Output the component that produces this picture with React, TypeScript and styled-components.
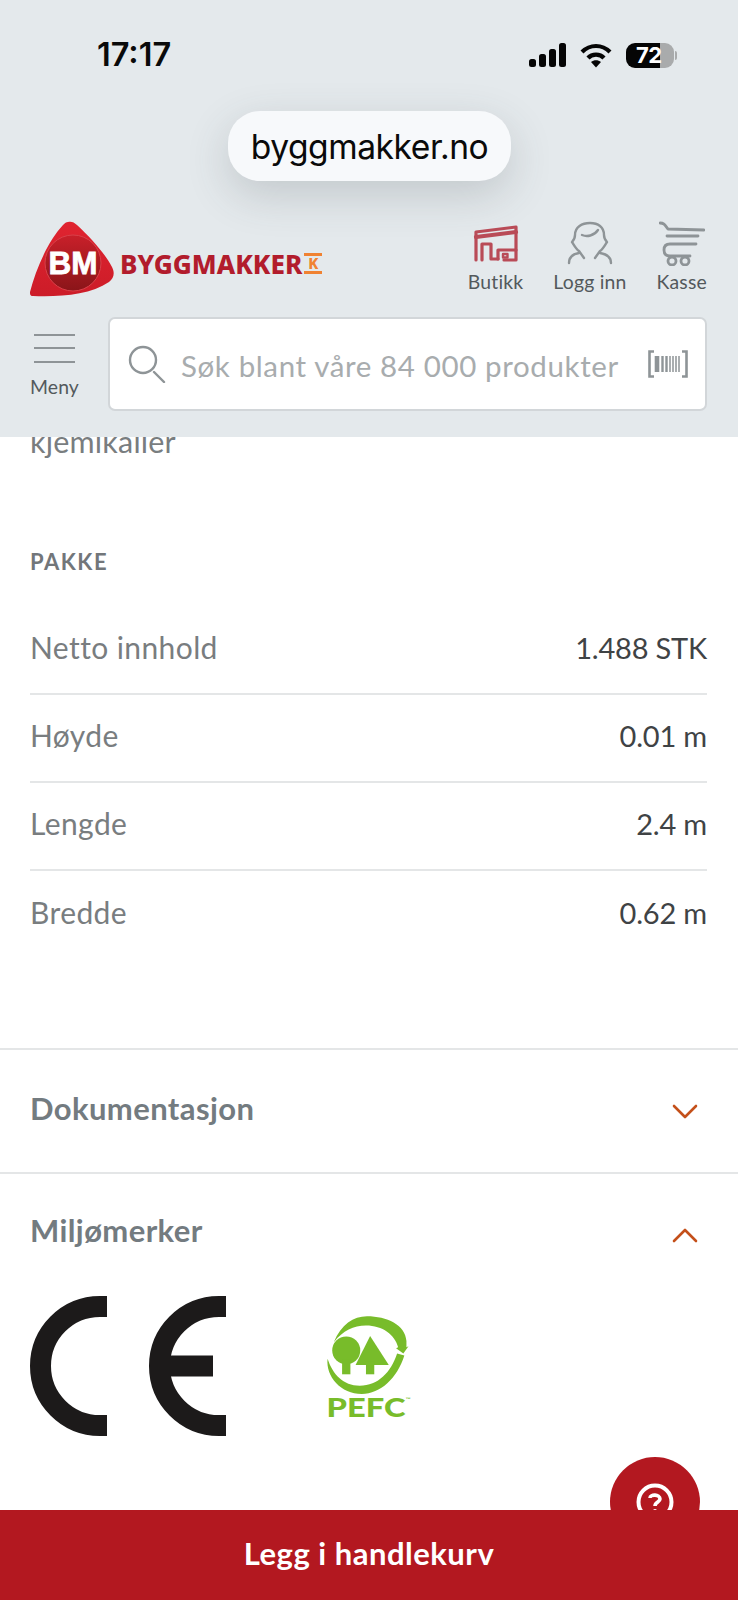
import React from "react";
import styled, { createGlobalStyle } from "styled-components";

const Global = createGlobalStyle`
  html, body { margin: 0; padding: 0; background: #fff; }
  * { box-sizing: border-box; }
`;

const Page = styled.div`
  position: relative;
  width: 738px;
  height: 1600px;
  overflow: hidden;
  background: #fff;
  font-family: Lato, "Noto Sans", sans-serif;
`;

const Header = styled.header`
  position: relative;
  z-index: 1;
  height: 437px;
  background: #e4e9ec;
  display: flex;
  flex-direction: column;
`;

const StatusBar = styled.div`
  height: 68px;
  padding: 42px 64px 0 97px;
  display: flex;
  align-items: center;
  justify-content: space-between;
  font-family: Inter, sans-serif;
`;

const Clock = styled.span`
  font-size: 32.5px;
  font-weight: 600;
  color: #0a0a0a;
  letter-spacing: 0;
  line-height: 26px;
`;

const StatusIcons = styled.div`
  display: flex;
  align-items: center;
  gap: 14px;
`;

const Battery = styled.div`
  position: relative;
  width: 48px;
  height: 25px;
  border-radius: 9px;
  background: linear-gradient(90deg, #050505 0 34px, #a9abac 34px);
  color: #fff;
  font-size: 22px;
  font-weight: 700;
  line-height: 25px;
  padding-left: 10px;
  letter-spacing: -0.5px;
  &::after {
    content: "";
    position: absolute;
    right: -3px;
    top: 8px;
    width: 2px;
    height: 9px;
    border-radius: 0 2px 2px 0;
    background: #a9abac;
  }
`;

const UrlPill = styled.div`
  align-self: center;
  width: 283px;
  height: 70px;
  margin-top: 43px;
  margin-left: 1px;
  border-radius: 32px;
  background: #f7f9fb;
  box-shadow: 0 14px 44px rgba(60, 70, 75, 0.2);
  display: flex;
  align-items: center;
  justify-content: center;
  font-family: Inter, sans-serif;
  font-size: 33.6px;
  letter-spacing: -0.45px;
  color: #0a0a0a;
`;

const BrandRow = styled.div`
  margin-top: 40px;
  padding: 0 31px 0 30px;
  height: 76px;
  display: flex;
  justify-content: space-between;
  align-items: flex-start;
`;

const Brand = styled.div`
  display: flex;
  align-items: center;
  height: 76px;
`;

const WordMark = styled.span`
  margin-left: 6px;
  margin-top: 9px;
  font-family: "Noto Sans", sans-serif;
  font-weight: 800;
  font-size: 26.1px;
  letter-spacing: 0;
  color: #b21c2c;
  line-height: 26px;
`;

const KMark = styled.span`
  margin-left: 2px;
  margin-top: 9px;
  width: 18px;
  height: 21px;
  border-top: 3px solid #f08232;
  border-bottom: 3px solid #f08232;
  font-family: "Noto Sans", sans-serif;
  font-weight: 800;
  font-size: 15px;
  line-height: 15px;
  color: #f08232;
  text-align: center;
`;

const Nav = styled.nav`
  display: flex;
  gap: 30px;
`;

const NavItem = styled.div`
  display: flex;
  flex-direction: column;
  align-items: center;
  font-size: 19.4px;
  line-height: 22px;
  color: #53595c;
  letter-spacing: 0.2px;
`;

const NavIcon = styled.svg`
  display: block;
  width: 46px;
  height: 45px;
  margin-bottom: 5px;
  fill: none;
  stroke-linecap: round;
  stroke-linejoin: round;
`;

const SearchRow = styled.div`
  margin-top: 20px;
  padding: 0 31px 0 30px;
  display: flex;
  gap: 29px;
`;

const MenuButton = styled.div`
  width: 49px;
  display: flex;
  flex-direction: column;
  align-items: center;
  font-size: 19.4px;
  line-height: 22px;
  color: #53595c;
  letter-spacing: 0.1px;
  padding-top: 17px;
`;

const MenuLines = styled.div`
  flex: none;
  width: 41px;
  height: 29px;
  margin-bottom: 13px;
  border-top: 2.5px solid #8e9497;
  border-bottom: 2.5px solid #8e9497;
  position: relative;
  &::after {
    content: "";
    position: absolute;
    left: 0;
    right: 0;
    top: 10.5px;
    height: 2.5px;
    background: #8e9497;
  }
`;

const SearchBox = styled.div`
  width: 599px;
  height: 94px;
  background: #fff;
  border: 2px solid #d2d6d9;
  border-radius: 7px;
  display: flex;
  align-items: center;
  padding: 0 17px 0 18px;
  gap: 15px;
`;

const Placeholder = styled.span`
  flex: 1;
  padding-top: 2px;
  font-size: 29.5px;
  color: #a8acae;
  letter-spacing: 0.62px;
  white-space: nowrap;
`;

const Main = styled.main`
  height: 1073px;
  overflow: hidden;
`;

const Content = styled.div`
  padding: 0 31px 0 30px;
`;

const Clipped = styled.p`
  margin: -14px 0 0;
  font-size: 30.5px;
  line-height: 36px;
  letter-spacing: 0.2px;
  color: #797d7f;
`;

const SectionTitle = styled.h3`
  margin: 90px 0 0;
  font-size: 22px;
  line-height: 26px;
  font-weight: 700;
  letter-spacing: 1.5px;
  color: #72767a;
`;

const SpecList = styled.div`
  margin-top: 32px;
`;

const SpecRow = styled.div`
  height: 88px;
  display: flex;
  align-items: center;
  justify-content: space-between;
  padding-bottom: 6px;
  border-bottom: 2px solid #e4e6e7;
  &:last-child { border-bottom: 0; }
`;

const SpecLabel = styled.span`
  font-size: 30px;
  letter-spacing: 0.4px;
  color: #797d7f;
`;

const SpecValue = styled.span`
  font-size: 29px;
  letter-spacing: -0.2px;
  color: #3f4345;
`;

const Accordion = styled.section<{ $gap?: number }>`
  margin-top: ${(p) => p.$gap ?? 0}px;
  border-top: 2px solid #e4e6e7;
`;

const AccordionHead = styled.div`
  height: 122px;
  padding: 0 40px 7px 30px;
  display: flex;
  align-items: center;
  justify-content: space-between;
  font-size: 31px;
  font-weight: 700;
  letter-spacing: 0.4px;
  color: #737b80;
`;

const OpenHead = styled(AccordionHead)`
  height: 118px;
  padding-bottom: 6px;
`;

const ChevronIcon = styled.svg`
  display: block;
  margin-top: 9px;
  fill: none;
`;

const MarkRow = styled.div`
  padding: 4px 0 0 30px;
  display: flex;
  align-items: flex-start;
  gap: 96px;
`;

const PefcMark = styled.svg`
  display: block;
  margin-top: 15px;
  width: 90px;
  height: 110px;
`;

const Fab = styled.div`
  position: absolute;
  left: 610px;
  top: 1457px;
  width: 90px;
  height: 90px;
  border-radius: 50%;
  background: #b31820;
  display: flex;
  align-items: center;
  justify-content: center;
`;

const BuyBar = styled.div`
  position: absolute;
  left: 0;
  right: 0;
  bottom: 0;
  height: 90px;
  background: #b31820;
  color: #fff;
  display: flex;
  align-items: center;
  justify-content: center;
  padding-bottom: 5px;
  font-size: 31px;
  font-weight: 700;
  letter-spacing: 0.5px;
`;

const Chevron = ({ up }: { up?: boolean }) => (
  <ChevronIcon width="26" height="16" viewBox="0 0 26 16">
    <path
      d={up ? "M2 14 L13 3 L24 14" : "M2 2 L13 13 L24 2"}
      stroke="#c4501a"
      strokeWidth="2.6"
      strokeLinecap="round"
      strokeLinejoin="round"
    />
  </ChevronIcon>
);

const specs = [
  ["Netto innhold", "1.488 STK"],
  ["Høyde", "0.01 m"],
  ["Lengde", "2.4 m"],
  ["Bredde", "0.62 m"],
];

export default function App() {
  return (
    <Page>
      <Global />
      <Header>
        <StatusBar>
          <Clock>17:17</Clock>
          <StatusIcons>
            <svg width="37" height="25" viewBox="0 0 37 25" fill="#050505">
              <rect x="0" y="16" width="7" height="8" rx="2.5" />
              <rect x="10" y="11" width="7" height="13" rx="2.5" />
              <rect x="20" y="6" width="7" height="18" rx="2.5" />
              <rect x="30" y="0" width="7" height="24" rx="2.5" />
            </svg>
            <svg width="32" height="25" viewBox="0 0 32 25" fill="none" stroke="#050505" strokeWidth="4.2">
              <path d="M2 9 C10 1 22 1 30 9" />
              <path d="M8 15 C12 10.5 20 10.5 24 15" />
              <path d="M11 19 L16 24.5 L21 19 C18 16.5 14 16.5 11 19 Z" fill="#050505" stroke="none" />
            </svg>
            <Battery>72</Battery>
          </StatusIcons>
        </StatusBar>
        <UrlPill>byggmakker.no</UrlPill>
        <BrandRow>
          <Brand>
            <svg width="84" height="76" viewBox="0 0 84 76">
              <defs>
                <linearGradient id="shield" x1="0" y1="0" x2="0" y2="1">
                  <stop offset="0" stopColor="#e02430" />
                  <stop offset="1" stopColor="#cc1c28" />
                </linearGradient>
                <linearGradient id="disc" x1="0" y1="0" x2="0" y2="1">
                  <stop offset="0" stopColor="#c9202a" />
                  <stop offset="1" stopColor="#8a1519" />
                </linearGradient>
              </defs>
              <path
                d="M38 1 C41 0 44 1 47 4 C62 18 76 34 82 46 C85 52 84 57 79 61 C60 74 30 76 3 75 C0 75 0 73 0 71 C6 48 18 20 33 4 C35 2 36 1 38 1 Z"
                fill="url(#shield)"
              />
              <circle cx="43" cy="42" r="28" fill="url(#disc)" stroke="#d8414a" strokeWidth="1" />
              <text x="43" y="53" textAnchor="middle" fontFamily="Liberation Sans, sans-serif" fontWeight="700" fontSize="31.5" stroke="#fff" strokeWidth="0.8" fill="#fff">
                BM
              </text>
            </svg>
            <WordMark>BYGGMAKKER</WordMark>
            <KMark>K</KMark>
          </Brand>
          <Nav>
            <NavItem>
              <NavIcon viewBox="0 0 46 45">
                <g stroke="#b94b57" strokeWidth="3.2">
                  <path d="M3 39 V11 L43 6 V39 H31" />
                  <path d="M3 16 L43 11" strokeWidth="4.2" />
                  <path d="M9 39 V23 H18 V38 H25" />
                  <path d="M25 38 V29 H43" />
                  <rect x="30" y="33" width="4.5" height="3.5" strokeWidth="2.4" />
                </g>
              </NavIcon>
              Butikk
            </NavItem>
            <NavItem>
              <NavIcon viewBox="0 0 46 45">
                <g stroke="#8e9497" strokeWidth="2.4">
                  <path d="M17 37 L12 30 C9 28 7 24 5 21 C7 19 8 17 8 14 C8 6 15 2 23 2 C31 2 37 6 37 14 C37 17 38 19 40 21 C38 24 36 28 33 30 L28 37" />
                  <path d="M2 42 C2 36 6 33 12 32 M44 42 C44 36 39 33 33 32" />
                  <path d="M15 14 C20 16 27 15 31 9" />
                </g>
              </NavIcon>
              Logg inn
            </NavItem>
            <NavItem>
              <NavIcon viewBox="0 0 46 45">
                <g stroke="#8e9497" strokeWidth="2.8">
                  <path d="M1 2 C5 2 6 4 9 8 L45 9" />
                  <path d="M8 15 H39" />
                  <path d="M37 23 H11 C7 23 5 25 5 29 C5 33 7 35 11 35 H31" />
                  <circle cx="13" cy="40" r="4" />
                  <circle cx="26" cy="40" r="4" />
                </g>
              </NavIcon>
              Kasse
            </NavItem>
          </Nav>
        </BrandRow>
        <SearchRow>
          <MenuButton>
            <MenuLines />
            Meny
          </MenuButton>
          <SearchBox>
            <svg width="38" height="38" viewBox="0 0 38 38" fill="none" stroke="#8e9497" strokeWidth="2.4" strokeLinecap="round">
              <circle cx="15" cy="15" r="13" />
              <path d="M26 27 L36 37" />
            </svg>
            <Placeholder>Søk blant våre 84 000 produkter</Placeholder>
            <svg width="40" height="28" viewBox="0 0 40 28" fill="none" stroke="#8e9497">
              <path d="M6 1.5 H1.5 V26.5 H6 M34 1.5 H38.5 V26.5 H34" strokeWidth="2.6" />
              <path d="M9 6 V22" strokeWidth="4.6" />
              <path d="M14.5 6 V22 M18.5 6 V22" strokeWidth="2.4" />
              <path d="M22 6 V22 M25 6 V22 M28 6 V22 M31 6 V22" strokeWidth="1.5" />
            </svg>
          </SearchBox>
        </SearchRow>
      </Header>
      <Main>
        <Content>
          <Clipped>kjemikalier</Clipped>
          <SectionTitle>PAKKE</SectionTitle>
          <SpecList>
            {specs.map(([k, v]) => (
              <SpecRow key={k}>
                <SpecLabel>{k}</SpecLabel>
                <SpecValue>{v}</SpecValue>
              </SpecRow>
            ))}
          </SpecList>
        </Content>
        <Accordion $gap={89}>
          <AccordionHead>
            Dokumentasjon
            <Chevron />
          </AccordionHead>
        </Accordion>
        <Accordion>
          <OpenHead>
            Miljømerker
            <Chevron up />
          </OpenHead>
          <MarkRow>
            <svg width="196" height="140" viewBox="0 0 196 140" fill="none" stroke="#1c1a1a" strokeWidth="21">
              <path d="M77 10.5 H70 A59.5 59.5 0 0 0 70 129.5 H77" />
              <path d="M196 10.5 H189 A59.5 59.5 0 0 0 189 129.5 H196" />
              <path d="M130 70 H183" />
            </svg>
            <PefcMark viewBox="2 1 86 106" fill="#78bc2a">
              <path d="M13 31 C20 14 32 6 45 6 C64 6 82 14 83 30 L83 36 L85 35 L80 42 L73 37 L75 36 C72 24 60 15 44 15 C32 15 22 20 13 31 Z" />
              <path d="M7 47 C5 64 20 81 40 81 C58 81 74 66 81 44 L74 42 C68 60 56 73 38 73 C22 73 12 62 7 47 Z" />
              <circle cx="25" cy="39" r="13.5" />
              <rect x="21" y="48" width="8" height="14" />
              <path d="M48 25 L66 53 H34 Z" />
              <rect x="44" y="50" width="8" height="12" />
              <text x="6" y="103" textLength="76" lengthAdjust="spacingAndGlyphs" fontFamily="Lato, sans-serif" fontWeight="900" fontSize="25">
                PEFC
              </text>
              <text x="82" y="88" fontFamily="Liberation Sans, sans-serif" fontWeight="700" fontSize="5">™</text>
            </PefcMark>
          </MarkRow>
        </Accordion>
      </Main>
      <Fab>
        <svg width="38" height="38" viewBox="0 0 38 38" fill="none" stroke="#fff" strokeWidth="4">
          <circle cx="19" cy="19" r="16.5" />
          <path d="M14 15 C14 11 24 11 24 16 C24 19 19 19 19 23" strokeWidth="3.6" />
          <circle cx="19" cy="28" r="2" fill="#fff" stroke="none" />
        </svg>
      </Fab>
      <BuyBar>Legg i handlekurv</BuyBar>
    </Page>
  );
}
